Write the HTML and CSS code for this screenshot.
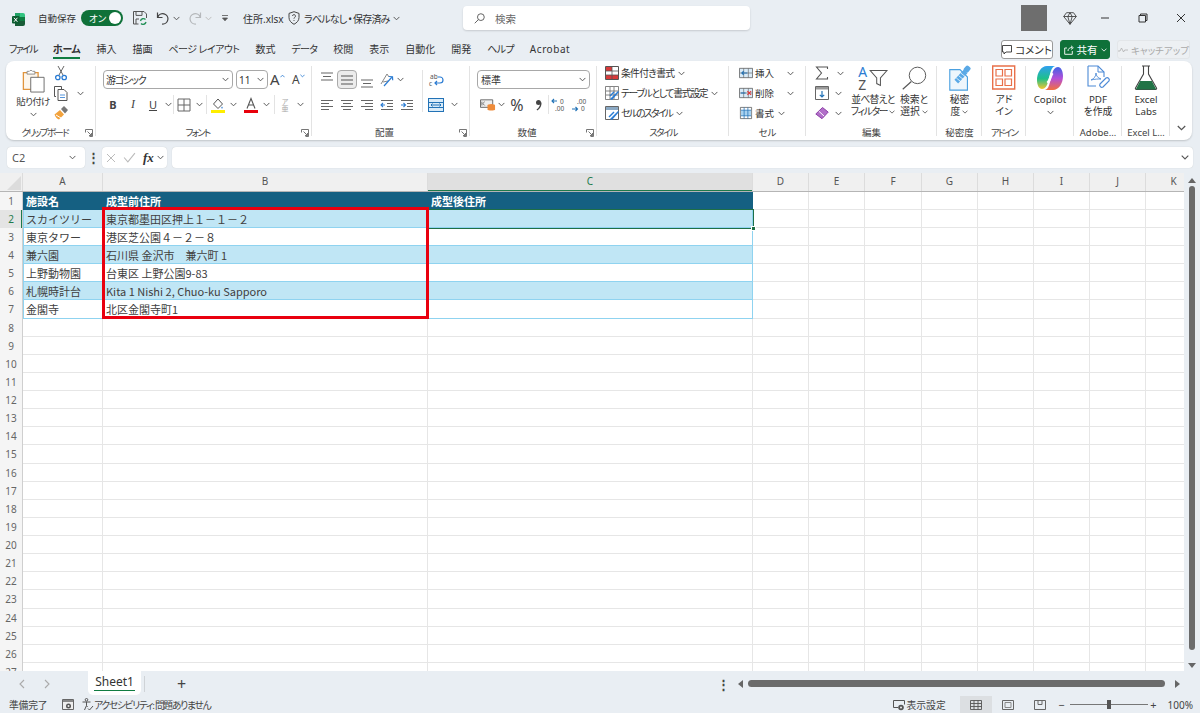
FILE: index.html
```html
<!DOCTYPE html>
<html lang="ja">
<head>
<meta charset="utf-8">
<title>住所.xlsx - Excel</title>
<link rel="stylesheet" href="styles.css">
</head>
<body>
<svg class="defs" aria-hidden="true">
  <symbol id="c" viewBox="0 0 8 5"><path d="M.7.7 4 4 7.3.7" fill="none" stroke="currentColor" stroke-width="1.1"/></symbol>
  <symbol id="launch" viewBox="0 0 8 8"><path d="M.5 3.5v-3h7v7h-3M2.5 2.5l4 4M6.5 4v2.500H4" fill="none" stroke="#666" stroke-width=".9"/></symbol>
  <symbol id="lines-c" viewBox="0 0 14 12"><path d="M1 1.500h12M3 4.500h8M1 7.500h12M3 10.500h8" stroke="#666" stroke-width="1.100"/></symbol>
  <symbol id="lines-l" viewBox="0 0 14 12"><path d="M1 1.500h12M1 4.500h8M1 7.500h12M1 10.500h8" stroke="#666" stroke-width="1.100"/></symbol>
  <symbol id="lines-r" viewBox="0 0 14 12"><path d="M1 1.500h12M5 4.500h8M1 7.500h12M5 10.500h8" stroke="#666" stroke-width="1.100"/></symbol>
</svg>

<header class="titlebar">
  <svg class="xl-logo" viewBox="0 0 14 13"><path d="M3 0h5v4H3z" fill="#21a366"/><path d="M8 0h3a2 2 0 0 1 2 2v2H8z" fill="#33c481"/><path d="M3 4h10v4H3z" fill="#107c41"/><path d="M3 8h10v3a2 2 0 0 1-2 2H3z" fill="#185c37"/><rect x="0" y="3" width="7.500" height="7.500" rx="1" fill="#0c5c30"/><path d="M2 4.800l3.400 4M5.400 4.800l-3.400 4" stroke="#fff" stroke-width="1"/></svg>
  <span class="autosave">自動保存</span>
  <span class="toggle"><span class="toggle-text">オン</span><span class="knob"></span></span>
  <svg class="qat save" viewBox="0 0 14 14"><path d="M.5.500h10.500l2.500 2.500v4M.5.500v12.500h5M3 .8v3.600h6V.8M3 13V8h3" fill="none" stroke="#555" stroke-width="1"/><path d="M7.500 10a3 3 0 0 1 5-1.500M13 11a3 3 0 0 1-5 1.500" fill="none" stroke="#27925a" stroke-width="1.400"/></svg>
  <svg class="qat undo" viewBox="0 0 14 14"><path d="M1.500 1.500v5h5M1.800 6.200A5.200 5.200 0 1 1 6 13" fill="none" stroke="#444" stroke-width="1.200"/></svg>
  <svg class="chev undo-c"><use href="#c"/></svg>
  <svg class="qat redo" viewBox="0 0 14 14"><path d="M12.500 1.500v5h-5M12.200 6.200A5.200 5.200 0 1 0 8 13" fill="none" stroke="#b5b8bb" stroke-width="1.200"/></svg>
  <svg class="chev redo-c dim"><use href="#c"/></svg>
  <svg class="qat-more" viewBox="0 0 8 8"><path d="M1 1.500h6M1.500 4 4 6.800 6.500 4z" fill="#555" stroke="#555" stroke-width=".8"/></svg>
  <span class="filename">住所.xlsx</span>
  <svg class="shield" viewBox="0 0 12 14"><path d="M6 .7 11 2.400v4.200c0 3-2.200 5.200-5 6.700C3.200 11.800 1 9.600 1 6.600V2.400z" fill="none" stroke="#444" stroke-width="1"/><path d="M4.500 5a1.500 1.500 0 1 1 2 1.500c-.5.2-.5.6-.5 1.200M6 9v1" fill="none" stroke="#444" stroke-width=".9"/></svg>
  <span class="label-state">ラベルなし • 保存済み</span>
  <svg class="chev state-c"><use href="#c"/></svg>
  <div class="search">
    <svg class="search-i" viewBox="0 0 12 12"><circle cx="7.500" cy="4.500" r="3.700" fill="none" stroke="#555"/><path d="M4.800 7.200.8 11.200" stroke="#555"/></svg>
    <span>検索</span>
  </div>
  <div class="avatar"></div>
  <svg class="gem" viewBox="0 0 14 13"><path d="M3.500.7h7L13.300 4.500 7 12.300.7 4.500zM.7 4.500h12.600M4.800 4.500 7 12.300l2.200-7.800L7 .7 4.800 4.500" fill="none" stroke="#444" stroke-width=".9"/></svg>
  <div class="winbtns">
    <svg viewBox="0 0 10 10"><path d="M1 5h8" stroke="#333"/></svg>
    <svg viewBox="0 0 10 10"><path d="M2.500 2.500V1h6.500v6.500H7.500M1 2.500h6.500V9H1z" fill="none" stroke="#333"/></svg>
    <svg viewBox="0 0 10 10"><path d="M1 1l8 8M9 1 1 9" stroke="#333"/></svg>
  </div>
</header>

<nav class="tabs">
  <span class="k2">ファイル</span><span class="active">ホーム</span><span>挿入</span><span>描画</span><span class="k1">ページ レイアウト</span><span>数式</span><span class="k3">データ</span><span>校閲</span><span>表示</span><span>自動化</span><span>開発</span><span class="k3">ヘルプ</span><span class="latin">Acrobat</span>
  <div class="tab-actions">
    <button class="btn-comment"><svg viewBox="0 0 10 10"><path d="M.5.500h9v6.500H4L2 9V7H.5z" fill="none" stroke="#333" stroke-width=".9"/></svg>コメント</button>
    <button class="btn-share"><svg viewBox="0 0 10 10"><path d="M3 3H.7v6.300h7.600V6M4 6c0-2.500 2-3.500 4-3.500M7 .8 9.300 2.700 7 4.500" fill="none" stroke="#fff" stroke-width=".9"/></svg>共有<svg class="chev"><use href="#c"/></svg></button>
    <button class="btn-catch"><svg viewBox="0 0 10 6"><path d="M0 4h2l1.500-3 2 4 1.200-2H10" fill="none" stroke="#b0b0b0" stroke-width=".8"/></svg>キャッチアップ</button>
  </div>
</nav>

<section class="ribbon">
  <div class="grp g-clip">
    <div class="body">
      <div class="paste">
        <svg class="paste-i" viewBox="0 0 25 26"><path d="M1.500 4h16v18h-16z" fill="#fdf6ec" stroke="#e0943c" stroke-width="1.400"/><path d="M5.500 5.500V2.500h2.500a2 2 0 0 1 3.500 0h2.500v3z" fill="#fff" stroke="#888"/><path d="M9.500 9h14.500v16H9.500z" fill="#fff" stroke="#666"/></svg>
        <span>貼り付け</span>
        <svg class="chev"><use href="#c"/></svg>
      </div>
      <div class="clip-tools">
        <div class="clip-row"><svg class="i16" viewBox="0 0 16 16"><path d="M5 1l5 9M11 1 6 10" stroke="#666" fill="none"/><circle cx="4.800" cy="12.500" r="2.200" fill="none" stroke="#2b7cd3" stroke-width="1.300"/><circle cx="11.200" cy="12.500" r="2.200" fill="none" stroke="#2b7cd3" stroke-width="1.300"/></svg></div>
        <div class="clip-row"><svg class="i16" viewBox="0 0 16 16"><path d="M3 11.500H1.500V1.500h7V4" fill="none" stroke="#555"/><path d="M5 4.500h6l3 3v8H5z" fill="#fff" stroke="#555"/><path d="M7 10h5M7 12.500h5" stroke="#2b7cd3" stroke-width=".8"/></svg><svg class="chev copy-c"><use href="#c"/></svg></div>
        <div class="clip-row"><svg class="i16" viewBox="0 0 16 16"><path d="M1.500 9.500 7 5l4 4.500-5 5c-1.500-.5-3.500-2-4.500-5z" fill="#f2a23c"/><path d="M8 4l3-3 4 4-3 3.500z" fill="#777"/><path d="M3 10l5 3" stroke="#fff" stroke-width="1"/></svg></div>
      </div>
    </div>
    <div class="glabel launch-gap tight3">クリップボード<svg class="launcher"><use href="#launch"/></svg></div>
  </div>

  <div class="grp g-font">
    <div class="body stack">
      <div class="rw">
        <div class="combo font-name"><span class="tight4">游ゴシック</span><svg class="chev"><use href="#c"/></svg></div>
        <div class="combo font-size"><span>11</span><svg class="chev"><use href="#c"/></svg></div>
        <span class="grow-a">A<svg viewBox="0 0 6 4"><path d="M.5 3.500 3 1l2.500 2.500" fill="none" stroke="#2b7cd3"/></svg></span>
        <span class="shrink-a">A<svg viewBox="0 0 6 4"><path d="M.5.500 3 3 5.500.500" fill="none" stroke="#2b7cd3"/></svg></span>
      </div>
      <div class="rw">
        <span class="sl b">B</span><span class="sl i">I</span><span class="sl u">U</span><span class="ch"><svg class="chev"><use href="#c"/></svg></span>
        <span class="vs"></span>
        <span class="sl"><svg class="i14" viewBox="0 0 14 14"><path d="M1 1h12v12H1zM7 1v12M1 7h12" fill="none" stroke="#666"/></svg></span><span class="ch"><svg class="chev"><use href="#c"/></svg></span>
        <span class="vs ml2"></span>
        <span class="sl ml1"><svg class="i14 tall" viewBox="0 0 14 16"><path d="M2.500 7 7 2l4.500 5L7 11.500z" fill="none" stroke="#555"/><path d="M11 9.500c1 1 1 2 0 2s-1-1 0-2z" fill="#2b7cd3"/><path d="M0 13h14v3H0z" fill="#ffee00"/></svg></span><span class="ch"><svg class="chev"><use href="#c"/></svg></span>
        <span class="sl ml3"><svg class="i14 tall" viewBox="0 0 14 16"><path d="M3 11.500 7 1.500l4 10M4.500 8h5" fill="none" stroke="#555" stroke-width="1.100"/><path d="M0 13h14v3H0z" fill="#e8000b"/></svg></span><span class="ch"><svg class="chev"><use href="#c"/></svg></span>
        <span class="vs ml3"></span>
        <span class="sl ruby"><small>ア</small><small>亜</small></span><span class="ch"><svg class="chev"><use href="#c"/></svg></span>
      </div>
    </div>
    <div class="glabel launch-gap tight3">フォント<svg class="launcher"><use href="#launch"/></svg></div>
  </div>

  <div class="grp g-align">
    <div class="body split">
      <div class="stack">
        <div class="rw">
          <span class="sl"><svg class="i14 top" viewBox="0 0 14 9"><path d="M1 1h12M3 4.500h8M1 8h12" stroke="#666" stroke-width="1.100"/></svg></span>
          <span class="sl on"><svg class="i14" viewBox="0 0 14 10"><path d="M1 1h12M1 5h12M1 9h12" stroke="#555" stroke-width="1.200"/></svg></span>
          <span class="sl"><svg class="i14 bot" viewBox="0 0 14 9"><path d="M1 1h12M3 4.500h8M1 8h12" stroke="#666" stroke-width="1.100"/></svg></span>
          <span class="sl"><svg class="i14" viewBox="0 0 14 14"><path d="M1 11 7 1l2 3M3 9l5-1" fill="none" stroke="#888"/><path d="M4 13 12 4M9 3.500l3.500.2.200 3.500" fill="none" stroke="#2b7cd3" stroke-width="1.200"/></svg></span>
          <span class="ch tight"><svg class="chev"><use href="#c"/></svg></span>
        </div>
        <div class="rw">
          <span class="sl"><svg class="i14"><use href="#lines-l"/></svg></span>
          <span class="sl"><svg class="i14"><use href="#lines-c"/></svg></span>
          <span class="sl"><svg class="i14"><use href="#lines-r"/></svg></span>
          <span class="sl"><svg class="i14" viewBox="0 0 14 12"><path d="M1 1.500h12M7 4.500h6M7 7.500h6M1 10.500h12" stroke="#666"/><path d="M5 6H.8M3 4 1 6l2 2" fill="none" stroke="#2b7cd3" stroke-width="1.100"/></svg></span>
          <span class="sl"><svg class="i14" viewBox="0 0 14 12"><path d="M1 1.500h12M7 4.500h6M7 7.500h6M1 10.500h12" stroke="#666"/><path d="M1 6h4.200M3.500 4l2 2-2 2" fill="none" stroke="#2b7cd3" stroke-width="1.100"/></svg></span>
        </div>
      </div>
      <span class="vs align-sep"></span>
      <div class="stack wrap-col">
        <div class="rw"><span class="sl"><svg class="i16 wrap" viewBox="0 0 16 18"><text x="2" y="8" class="svg-t">ab</text><text x="1" y="15" class="svg-t">c</text><path d="M7 12h5a3 3 0 0 0 0-6H10M9 10l-2 2 2 2" fill="none" stroke="#2b7cd3" stroke-width="1.200"/></svg></span></div>
        <div class="rw"><span class="sl"><svg class="i16" viewBox="0 0 16 14"><rect x=".5" y=".5" width="15" height="13" fill="#d9ebf8" stroke="#2272b6"/><path d="M.5 4.500h15M.5 9.500h15" stroke="#2272b6"/><path d="M3 7h10M4.500 5.500 3 7l1.500 1.500M11.500 5.500 13 7l-1.500 1.500" fill="none" stroke="#2272b6"/></svg></span><span class="ch merge-c"><svg class="chev"><use href="#c"/></svg></span></div>
      </div>
    </div>
    <div class="glabel launch-gap">配置<svg class="launcher"><use href="#launch"/></svg></div>
  </div>

  <div class="grp g-num">
    <div class="body stack">
      <div class="rw"><div class="combo num-fmt"><span>標準</span><svg class="chev"><use href="#c"/></svg></div></div>
      <div class="rw">
        <span class="sl"><svg class="i16" viewBox="0 0 17 13"><path d="M.5 1h13v8H.5z" fill="#eee" stroke="#666"/><ellipse cx="12" cy="7" rx="4" ry="1.600" fill="#ee8b3a"/><path d="M8 7v4.500c0 1 8 1 8 0V7" fill="#ee8b3a"/><path d="M2 3v4M3 5l2-2M3 5l2 2" stroke="#555" fill="none" stroke-width=".8"/></svg></span><span class="ch tight"><svg class="chev"><use href="#c"/></svg></span>
        <span class="sl pct">%</span>
        <span class="sl comma"><svg viewBox="0 0 7 12"><circle cx="3.500" cy="3.500" r="2.500" fill="#444"/><path d="M5.900 3.500c0 3.500-1.500 6-4 7.500" fill="none" stroke="#444" stroke-width="1.400"/></svg></span>
        <span class="vs"></span>
        <span class="sl"><svg class="i16" viewBox="0 0 16 14"><path d="M6 3H1M3 1 1 3l2 2" fill="none" stroke="#2272b6" stroke-width="1.100"/><text x="9" y="6" class="svg-t">0</text><text x="4" y="13" class="svg-t">.00</text></svg></span>
        <span class="sl"><svg class="i16" viewBox="0 0 16 14"><text x="6" y="6" class="svg-t">.00</text><path d="M1 11h5M4.500 9l2 2-2 2" fill="none" stroke="#2272b6" stroke-width="1.100"/><text x="10" y="13" class="svg-t">0</text></svg></span>
      </div>
    </div>
    <div class="glabel launch-gap">数値<svg class="launcher"><use href="#launch"/></svg></div>
  </div>

  <div class="grp g-style">
    <div class="body list">
      <div class="li"><svg class="i14" viewBox="0 0 14 14"><path d="M.5.500h13v13H.5z" fill="#fff" stroke="#555"/><path d="M1 1h6v4H1zM7 9h6v4H7z" fill="#d83b3b"/><path d="M1 9h6v4H1z" fill="#d83b3b"/><path d="M7 1v12M1 5h12M1 9h12" stroke="#555" stroke-width=".8"/></svg><span class="tight1">条件付き書式</span><svg class="chev"><use href="#c"/></svg></div>
      <div class="li"><svg class="i14" viewBox="0 0 14 14"><path d="M.5.500h13v13H.5zM5 1v12M9 1v12M1 5h12M1 9h12" fill="#fff" stroke="#666" stroke-width=".8"/><path d="M5 13 13 5l1 1-7 8z" fill="#2b7cd3"/><path d="M5 10l4-4" stroke="#2b7cd3" stroke-width="1.500"/></svg><span class="tight2">テーブルとして書式設定</span><svg class="chev"><use href="#c"/></svg></div>
      <div class="li"><svg class="i14" viewBox="0 0 14 14"><path d="M.5.500h13v13H.5z" fill="#fff" stroke="#666"/><path d="M1 1h12v3H1z" fill="#8ba9c4"/><path d="M5 13 13 5l1 1-7 8z" fill="#2b7cd3"/><path d="M4 11l5-5" stroke="#2b7cd3" stroke-width="1.500"/></svg><span class="tight3">セルのスタイル</span><svg class="chev"><use href="#c"/></svg></div>
    </div>
    <div class="glabel tight3">スタイル</div>
  </div>

  <div class="grp g-cell">
    <div class="body list">
      <div class="li"><svg class="i14" viewBox="0 0 15 14"><path d="M.5 2h14v10H.5z" fill="#d9ebf8" stroke="#555" stroke-width=".8"/><path d="M5 2v10M10 2v10M1 7h13" stroke="#666" stroke-width=".7"/><path d="M9 7H3M5 5 3 7l2 2" fill="none" stroke="#2272b6" stroke-width="1.200"/></svg><span>挿入</span><svg class="chev far"><use href="#c"/></svg></div>
      <div class="li"><svg class="i14" viewBox="0 0 15 14"><path d="M.5 2h14v10H.5z" fill="#d9ebf8" stroke="#555" stroke-width=".8"/><path d="M5 2v10M10 2v10M1 7h13" stroke="#666" stroke-width=".7"/><path d="M9 5l4 4M13 5 9 9" stroke="#e23b3b" stroke-width="1.300"/><path d="M2 7h5" stroke="#2272b6" stroke-width="1.200"/></svg><span>削除</span><svg class="chev far"><use href="#c"/></svg></div>
      <div class="li"><svg class="i14" viewBox="0 0 15 14"><path d="M1.500 1h12v12h-12z" fill="#fff" stroke="#555" stroke-width=".8"/><path d="M2 4h11v6H2z" fill="#a8d2f0"/><path d="M5.500 1v12M9.500 1v12M2 4h11M2 10h11" stroke="#2272b6" stroke-width=".8"/></svg><span>書式</span><svg class="chev"><use href="#c"/></svg></div>
    </div>
    <div class="glabel">セル</div>
  </div>

  <div class="grp g-edit">
    <div class="body edit">
      <div class="edit-small">
        <div class="es-row"><svg class="i14" viewBox="0 0 14 14"><path d="M12.500 3V1H1.500l5 6-5 6h11v-2" fill="none" stroke="#555" stroke-width="1.100"/></svg><svg class="chev sig-c"><use href="#c"/></svg></div>
        <div class="es-row"><svg class="i14" viewBox="0 0 14 14"><path d="M.5.500h13v13H.5z" fill="#fff" stroke="#666"/><path d="M1 1h12v2.500H1z" fill="#999"/><path d="M7 5v6M4.800 8.800 7 11l2.200-2.200" fill="none" stroke="#2272b6" stroke-width="1.200"/></svg><svg class="chev"><use href="#c"/></svg></div>
        <div class="es-row"><svg class="i14" viewBox="0 0 14 14"><path d="M.8 8 7.500 1.500l5.700 4.600L7 12.700z" fill="#b16fc8" stroke="#8d3fa8"/><path d="M3.800 5.200 9 10" stroke="#fff"/></svg><svg class="chev"><use href="#c"/></svg></div>
      </div>
      <div class="big sort">
        <svg class="big-i sort-i" viewBox="0 0 34 28"><text x="1" y="13" class="svg-az blue">A</text><text x="1" y="27" class="svg-az">Z</text><path d="M14 6h18l-7 8v8l-4-2v-6z" fill="none" stroke="#555" stroke-width="1.100"/></svg>
        <span class="tight1">並べ替えと</span><span class="tight2">フィルター <svg class="chev inl"><use href="#c"/></svg></span>
      </div>
      <div class="big find">
        <svg class="big-i" viewBox="0 0 30 28"><circle cx="19" cy="11" r="9.500" fill="none" stroke="#555" stroke-width="1.100"/><path d="M12 18 2 27" stroke="#555" stroke-width="1.300"/></svg>
        <span>検索と</span><span>選択 <svg class="chev inl"><use href="#c"/></svg></span>
      </div>
    </div>
    <div class="glabel">編集</div>
  </div>

  <div class="grp g-sens">
    <div class="body"><div class="big">
      <svg class="big-i" viewBox="0 0 26 28"><path d="M2 5h11l8 8v14H2z" fill="#eef6fc" stroke="#4aa0e0" stroke-width="1.200"/><path d="M7 16 17 5l4 4L11 20z" fill="#5aa9e6"/><path d="M9 14l5 4M11.500 11.500l5 4M14 8.800l5 4" stroke="#fff" stroke-width=".8"/><rect x="18" y="1" width="6" height="7" rx="2" transform="rotate(40 21 4)" fill="#5aa9e6"/></svg>
      <span>秘密</span><span>度 <svg class="chev inl"><use href="#c"/></svg></span>
    </div></div>
    <div class="glabel">秘密度</div>
  </div>

  <div class="grp g-addin">
    <div class="body"><div class="big">
      <svg class="big-i" viewBox="0 0 24 26"><path d="M.7 1h22v23H.7z" fill="#fff" stroke="#e8704a" stroke-width="1.400"/><path d="M4 4.500h6.500V11H4zM13 4.500h6.500V11H13zM4 14h6.500v6.500H4zM13 14h6.500v6.500H13z" fill="#fff" stroke="#e8704a" stroke-width="1.200"/></svg>
      <span>アド</span><span>イン</span>
    </div></div>
    <div class="glabel tight3">アドイン</div>
  </div>

  <div class="grp g-copilot">
    <div class="body"><div class="big">
      <svg class="big-i copilot-i" viewBox="0 0 26 26">
        <defs>
          <linearGradient id="cpA" x1="0" y1="0" x2="0" y2="1"><stop offset="0" stop-color="#2f9ff0"/><stop offset=".55" stop-color="#1fc08a"/><stop offset="1" stop-color="#f5c52e"/></linearGradient>
          <linearGradient id="cpB" x1="0" y1="0" x2="0" y2="1"><stop offset="0" stop-color="#3f63e6"/><stop offset=".5" stop-color="#b44fd8"/><stop offset="1" stop-color="#f2703f"/></linearGradient>
        </defs>
        <path d="M10 1h8c-3 1-4 4-5 8l-2 8c-1 4-3 7-6 7-3 0-5-4-5-9C0 8 4 1 10 1z" fill="url(#cpA)"/>
        <path d="M16 25H8c3-1 4-4 5-8l2-8c1-4 3-7 6-7 3 0 5 4 5 9 0 7-4 14-10 14z" fill="url(#cpB)"/>
        <path d="M15.500 8C13.500 10 13.500 15 10.500 18" fill="none" stroke="#fff" stroke-width="2.600"/>
      </svg>
      <span>Copilot</span><svg class="chev line-c"><use href="#c"/></svg>
    </div></div>
    <div class="glabel"></div>
  </div>

  <div class="grp g-pdf">
    <div class="body"><div class="big">
      <svg class="big-i" viewBox="0 0 24 26"><path d="M2 1h10l6 6v5M2 1v20h8" fill="none" stroke="#4d8ad6" stroke-width="1.100"/><path d="M12 1v6h6" fill="none" stroke="#4d8ad6"/><path d="M5 15c3-1 5-4 5-7 0 3 2 5 5 6-3 0-6 0-10 1z" fill="none" stroke="#4d8ad6" stroke-width=".9"/><path d="M14 19l6-6a2.200 2.200 0 0 1 3 3l-6 6a2.200 2.200 0 0 1-3-3z" fill="none" stroke="#4d8ad6" stroke-width="1.200"/></svg>
      <span>PDF</span><span>を作成</span>
    </div></div>
    <div class="glabel">Adobe…</div>
  </div>

  <div class="grp g-labs">
    <div class="body"><div class="big">
      <svg class="big-i" viewBox="0 0 24 26"><path d="M8 1h8M9.500 1v8L1.500 23a1 1 0 0 0 1 1.500h19a1 1 0 0 0 1-1.500l-8-14V1" fill="#fff" stroke="#444" stroke-width="1.100"/><path d="M6.200 16h11.600l4 7.500a.7.700 0 0 1-.6 1H2.800a.7.700 0 0 1-.6-1z" fill="#217346"/></svg>
      <span>Excel</span><span>Labs</span>
    </div></div>
    <div class="glabel">Excel L…</div>
  </div>

  <div class="collapse"><svg class="chev"><use href="#c"/></svg></div>
</section>

<section class="formula">
  <div class="namebox"><span>C2</span><svg class="chev"><use href="#c"/></svg></div>
  <span class="kebab">⋮</span>
  <div class="fx-box">
    <svg viewBox="0 0 10 10"><path d="M1 1l8 8M9 1 1 9" stroke="#bbb"/></svg>
    <svg class="fx-check" viewBox="0 0 12 10"><path d="M1 5l3.500 4L11 1" fill="none" stroke="#bbb"/></svg>
    <i>fx</i>
    <svg class="chev"><use href="#c"/></svg>
  </div>
  <div class="fx-input"><svg class="chev"><use href="#c"/></svg></div>
</section>

<section class="sheet-wrap">
  <div class="sheet">
    <div class="colhead">
      <div class="corner"><svg viewBox="0 0 14 14"><path d="M14 0v14H0z" fill="#dcdcdc"/></svg></div>
      <div>A</div><div>B</div><div class="sel">C</div><div>D</div><div>E</div><div>F</div><div>G</div><div>H</div><div>I</div><div>J</div><div>K</div>
    </div>
    <div class="rows">
      <div class="row"><div class="rh">1</div><div class="cell th">施設名</div><div class="cell th">成型前住所</div><div class="cell th">成型後住所</div></div>
      <div class="row"><div class="rh sel">2</div><div class="cell band">スカイツリー</div><div class="cell band">東京都墨田区押上１－１－２</div><div class="cell band"></div></div>
      <div class="row"><div class="rh">3</div><div class="cell pl">東京タワー</div><div class="cell pl">港区芝公園４－２－８</div><div class="cell pl"></div></div>
      <div class="row"><div class="rh">4</div><div class="cell band">兼六園</div><div class="cell band">石川県 金沢市　兼六町 1</div><div class="cell band"></div></div>
      <div class="row"><div class="rh">5</div><div class="cell pl">上野動物園</div><div class="cell pl">台東区 上野公園9-83</div><div class="cell pl"></div></div>
      <div class="row"><div class="rh">6</div><div class="cell band">札幌時計台</div><div class="cell band">Kita 1 Nishi 2, Chuo-ku Sapporo</div><div class="cell band"></div></div>
      <div class="row"><div class="rh">7</div><div class="cell pl">金閣寺</div><div class="cell pl">北区金閣寺町1</div><div class="cell pl"></div></div>
      <div class="row"><div class="rh">8</div></div>
      <div class="row"><div class="rh">9</div></div>
      <div class="row"><div class="rh">10</div></div>
      <div class="row"><div class="rh">11</div></div>
      <div class="row"><div class="rh">12</div></div>
      <div class="row"><div class="rh">13</div></div>
      <div class="row"><div class="rh">14</div></div>
      <div class="row"><div class="rh">15</div></div>
      <div class="row"><div class="rh">16</div></div>
      <div class="row"><div class="rh">17</div></div>
      <div class="row"><div class="rh">18</div></div>
      <div class="row"><div class="rh">19</div></div>
      <div class="row"><div class="rh">20</div></div>
      <div class="row"><div class="rh">21</div></div>
      <div class="row"><div class="rh">22</div></div>
      <div class="row"><div class="rh">23</div></div>
      <div class="row"><div class="rh">24</div></div>
      <div class="row"><div class="rh">25</div></div>
      <div class="row"><div class="rh">26</div></div>
      <div class="row"><div class="rh">27</div></div>
    </div>
    <div class="selection"><span class="handle"></span></div>
    <div class="redbox"></div>
  </div>
  <div class="vscroll">
    <span class="tri up"></span>
    <span class="vthumb"></span>
    <span class="tri down"></span>
  </div>
</section>

<section class="sheetbar">
  <svg class="nav first" viewBox="0 0 6 10"><path d="M5 1 1 5l4 4" fill="none" stroke="#aaa" stroke-width="1.100"/></svg>
  <svg class="nav second" viewBox="0 0 6 10"><path d="M1 1l4 4-4 4" fill="none" stroke="#aaa" stroke-width="1.100"/></svg>
  <div class="sheet-tab">Sheet1</div>
  <span class="tab-sep"></span>
  <span class="plus">+</span>
  <span class="dots">⋮</span>
  <span class="tri left"></span>
  <span class="hthumb"></span>
  <span class="tri right"></span>
</section>

<footer class="status">
  <span class="ready">準備完了</span>
  <svg class="macro" viewBox="0 0 12 11"><path d="M.5.500h11v10H.5z" fill="#eee" stroke="#666"/><path d="M1 1h10v2H1z" fill="#888"/><circle cx="6.500" cy="7" r="2.500" fill="#555"/><circle cx="6.500" cy="7" r="1" fill="#eee"/></svg>
  <svg class="a11y" viewBox="0 0 12 13"><circle cx="5" cy="1.800" r="1.300" fill="none" stroke="#555"/><path d="M1 4h8M5 4v3.500L3 12M5 7.500 6 9M6.500 10.500 8 12l3.500-4" fill="none" stroke="#555"/></svg>
  <span class="a11y-t">アクセシビリティ: 問題ありません</span>
  <div class="status-right">
    <svg class="disp" viewBox="0 0 12 12"><path d="M5 8.500H.5v-7h11v4" fill="none" stroke="#555"/><circle cx="8" cy="8.500" r="2.800" fill="#555"/><circle cx="8" cy="8.500" r="1" fill="#eee"/></svg>
    <span class="disp-t">表示設定</span>
    <span class="view on"><svg viewBox="0 0 12 10"><path d="M.5.500h11v9H.5zM.5 3.500h11M.5 6.500h11M4 .5v9M8 .5v9" fill="none" stroke="#555" stroke-width=".9"/></svg></span>
    <span class="view"><svg viewBox="0 0 12 10"><path d="M.5.500h11v9H.5z" fill="none" stroke="#666"/><path d="M3 2.500h6v5H3z" fill="none" stroke="#888"/></svg></span>
    <span class="view"><svg viewBox="0 0 12 10"><path d="M.5.500v9h11v-9M4 .5v4h4v-4M.5.500h11" fill="none" stroke="#666"/></svg></span>
    <span class="zm">−</span>
    <span class="slider"><span class="sthumb"></span></span>
    <span class="zm">+</span>
    <span class="pct100">100%</span>
  </div>
</footer>
</body>
</html>
```
FILE: styles.css
```css
* { box-sizing: border-box; }
html, body { margin: 0; height: 100%; }
body {
  width: 1200px; height: 713px; overflow: hidden;
  display: flex; flex-direction: column;
  background: #e9eef3; color: #3a3a3a;
  font-family: "Noto Sans", "Noto Sans CJK JP", sans-serif;
  font-size: 10px;
  font-feature-settings: "palt";
}
.defs { display: none; }
svg { display: block; flex: none; }
.chev { width: 7px; height: 5px; color: #555; }
.chev.dim { color: #bbb; }
button { font: inherit; padding: 0; }
.tight1 { letter-spacing: -.7px; }
.tight2 { letter-spacing: -1.300px; }
.tight3 { letter-spacing: -1.700px; }
.tight4 { letter-spacing: -1.200px; }

/* title bar */
.titlebar { height: 36px; display: flex; align-items: center; padding-left: 12px; flex: none; }
.xl-logo { width: 14px; height: 13px; margin-top: 2px; }
.autosave { margin-left: 12px; width: 37px; font-size: 9.500px; color: #333; white-space: nowrap; }
.toggle { margin-left: 6px; width: 42px; height: 16px; border-radius: 8px; background: #0f7139; display: flex; align-items: center; justify-content: space-between; padding: 0 2px 0 8px; color: #fff; }
.toggle-text { font-size: 9.500px; }
.knob { width: 12px; height: 12px; border-radius: 50%; background: #fff; }
.qat { width: 14px; height: 14px; }
.save { margin-left: 10px; }
.undo { margin-left: 9px; }
.undo-c { margin-left: 3px; }
.redo { margin-left: 8px; }
.redo-c { margin-left: 3px; }
.qat-more { width: 8px; height: 8px; margin-left: 9px; }
.filename { margin-left: 14px; width: 44px; color: #333; white-space: nowrap; }
.shield { width: 12px; height: 14px; margin-left: 1px; }
.label-state { margin-left: 4px; color: #333; width: 88px; white-space: nowrap; letter-spacing: -.8px; }
.state-c { margin-left: 1px; }
.search { margin-left: 63px; width: 287px; height: 24px; background: #fff; border-radius: 4px; box-shadow: 0 1px 2px rgba(0,0,0,.15); display: flex; align-items: center; padding-left: 11px; color: #666; font-size: 10.500px; }
.search-i { width: 11px; height: 11px; margin-right: 10px; }
.avatar { margin-left: 271px; width: 26px; height: 26px; background: #6e6e6e; }
.gem { width: 14px; height: 13px; margin-left: 16px; }
.winbtns { margin-left: 23px; display: flex; gap: 28px; }
.winbtns svg { width: 10px; height: 10px; }

/* tabs */
.tabs { height: 25px; flex: none; display: flex; align-items: flex-start; padding: 4px 0 0 9px; gap: 16px; font-size: 10px; color: #333; }
.tabs > span { height: 19px; line-height: 18px; white-space: nowrap; }
.tabs > span.active { font-weight: 700; border-bottom: 2px solid #107c41; letter-spacing: -.3px; }
.tabs > .k1 { letter-spacing: -.55px; }
.tabs > .k2 { letter-spacing: -1.700px; }
.tabs > .k3 { letter-spacing: -.7px; }
.tabs > .latin { letter-spacing: .55px; }
.tab-actions { margin-left: auto; display: flex; gap: 7px; margin-right: 10px; }
.tab-actions button { height: 19px; border-radius: 3px; display: flex; align-items: center; justify-content: center; gap: 3px; font-size: 10.500px; border: 1px solid #999; background: #fff; color: #333; }
.tab-actions svg { width: 10px; height: 10px; }
.btn-comment { width: 52px; }
.tab-actions .btn-share { width: 50px; background: #0f7139; border-color: #0f7139; color: #fff; }
.tab-actions .btn-share .chev { width: 6px; height: 4px; color: #fff; }
.tab-actions .btn-catch { width: 73px; background: #edf0f3; border-color: #e3e6e9; color: #aaa; font-size: 9.500px; }

/* ribbon */
.ribbon { flex: none; height: 79px; margin: 0 8px 0 6px; background: #fff; border-radius: 8px; box-shadow: 0 1px 2px rgba(0,0,0,.18); display: flex; }
.grp { display: flex; flex-direction: column; position: relative; flex: none; }
.grp::after { content: ""; position: absolute; right: 0; top: 5px; bottom: 4px; width: 1px; background: #e3e3e3; }
.g-clip { width: 90px; } .g-font { width: 216px; } .g-align { width: 158px; } .g-num { width: 127px; }
.g-style { width: 132px; } .g-cell { width: 77px; } .g-edit { width: 131px; } .g-sens { width: 45px; }
.g-addin { width: 44px; } .g-copilot { width: 48px; } .g-pdf { width: 48px; } .g-labs { width: 48px; }
.body { flex: 1; display: flex; min-height: 0; }
.stack { display: flex; flex-direction: column; gap: 6px; padding-top: 9px; }
.rw { height: 19px; display: flex; align-items: center; }
.glabel { height: 15px; flex: none; text-align: center; font-size: 9.500px; line-height: 15px; color: #444; white-space: nowrap; }
.launch-gap { padding-right: 13px; position: relative; }
.launcher { position: absolute; right: 3px; bottom: 3px; width: 8px; height: 8px; }
.i14 { width: 14px; height: 14px; }
.i14.tall { height: 16px; }
.i14.top { height: 9px; margin-top: -6px; }
.i14.bot { height: 9px; margin-top: 7px; }
.i16 { width: 16px; height: 16px; }
.i16.wrap { height: 18px; }
.sl { width: 20px; height: 19px; display: flex; align-items: center; justify-content: center; flex: none; color: #444; }
.ch { width: 10px; height: 19px; display: flex; align-items: center; justify-content: center; flex: none; }
.ch.tight { margin-left: -2px; }
.vs { width: 1px; height: 19px; background: #e3e3e3; flex: none; }
.ml1 { margin-left: 1px; } .ml2 { margin-left: 2px; } .ml3 { margin-left: 3px; }
.svg-t { font-size: 6.500px; fill: #555; font-family: "Noto Sans", sans-serif; }
.svg-az { font-size: 15px; fill: #555; font-family: "Noto Sans", sans-serif; }
.svg-az.blue { fill: #2b7cd3; }

/* clipboard */
.paste { width: 44px; margin-left: 5px; padding-top: 8px; display: flex; flex-direction: column; align-items: center; }
.paste-i { width: 23px; height: 24px; }
.paste span { margin-top: 2px; line-height: 13px; font-size: 9.500px; white-space: nowrap; letter-spacing: -.7px; }
.paste .chev { margin-top: 4px; }
.clip-tools { display: flex; flex-direction: column; margin-left: -2px; padding-top: 2px; }
.clip-row { height: 20px; display: flex; align-items: center; }
.copy-c { margin-left: 8px; }

/* font */
.g-font .stack { padding-left: 7px; }
.combo { height: 19px; border: 1px solid #a8a8a8; border-radius: 4px; display: flex; align-items: center; justify-content: space-between; padding: 0 3px 0 2px; font-size: 10px; color: #333; background: #fff; }
.font-name { width: 130px; }
.font-size { width: 32px; margin-left: 3px; }
.grow-a { margin-left: 2px; font-size: 15px; width: 16px; display: flex; line-height: 19px; color: #444; }
.shrink-a { margin-left: 6px; font-size: 12px; width: 16px; display: flex; line-height: 19px; color: #444; }
.grow-a svg, .shrink-a svg { width: 5px; height: 4px; margin-top: 4px; }
.b { font-weight: 700; font-size: 11px; }
.i { font-style: italic; font-family: "Liberation Serif", serif; font-size: 12px; }
.u { text-decoration: underline; font-size: 11px; }
.ruby { flex-direction: column; color: #aaa; line-height: 7px; }
.ruby small { font-size: 7px; }

/* align */
.g-align .split { display: flex; padding-left: 5px; }
.sl.on { background: #ececec; border: 1px solid #aaa; border-radius: 4px; }
.align-sep { height: 42px; margin: 9px 0 0 5px; }
.wrap-col { margin-left: 3px; }
.merge-c { margin-left: 3px; }

/* number */
.g-num .stack { padding-left: 7px; }
.num-fmt { width: 113px; padding-left: 3px; }
.g-num .sl:first-child { margin-left: 1px; }
.pct { font-size: 16px; margin-left: 1px; }
.comma { margin-left: 1px; }
.comma svg { width: 7px; height: 12px; }

/* style + cell lists */
.list { display: flex; flex-direction: column; padding: 2px 0 0 8px; }
.li { height: 20px; display: flex; align-items: center; gap: 2px; font-size: 9.800px; color: #333; white-space: nowrap; }
.li .chev { margin-left: 2px; }
.g-cell .list { padding-left: 10px; }
.g-cell .li { font-size: 9.500px; }
.li .far { margin-left: 11px; }

/* editing */
.edit { padding-left: 9px; }
.edit-small { width: 36px; padding-top: 2px; display: flex; flex-direction: column; }
.es-row { height: 20px; display: flex; align-items: center; gap: 6px; }
.sig-c { margin-left: 2px; }
.big { display: flex; flex-direction: column; align-items: center; width: 100%; padding-top: 4px; font-size: 9.800px; line-height: 12px; color: #333; white-space: nowrap; }
.big span { display: flex; align-items: center; gap: 2px; height: 12px; }
.big-i { width: 26px; height: 26px; margin-bottom: 3px; }
.sort { width: 42px; flex: none; margin-left: 1px; }
.find { width: 40px; flex: none; }
.sort-i { width: 34px; }
.chev.inl { width: 6px; height: 4px; }
.chev.line-c { margin-top: 4px; }
.collapse { flex: 1; display: flex; align-items: flex-end; justify-content: center; padding-bottom: 9px; }
.collapse .chev { width: 9px; height: 6px; }

/* formula */
.formula { flex: none; margin: 7px 7px 0 7px; height: 21px; display: flex; align-items: stretch; }
.namebox { width: 78px; background: #fff; border-radius: 4px; display: flex; align-items: center; justify-content: space-between; padding: 0 9px 0 5px; font-size: 11px; color: #555; box-shadow: 0 0 1px rgba(0,0,0,.2); }
.kebab { width: 17px; text-align: center; font-size: 13px; line-height: 21px; font-weight: 700; color: #444; }
.fx-box { width: 65px; background: #fff; border-radius: 4px; display: flex; align-items: center; padding-left: 4px; gap: 7px; box-shadow: 0 0 1px rgba(0,0,0,.2); }
.fx-box svg { width: 10px; height: 10px; }
.fx-box svg.fx-check { width: 13px; height: 11px; }
.fx-box i { font-family: "Liberation Serif", serif; font-weight: 700; font-size: 13px; color: #333; }
.fx-box svg.chev { width: 7px; height: 5px; margin-left: -4px; }
.fx-input { margin-left: 5px; flex: 1; background: #fff; border-radius: 4px; display: flex; align-items: center; justify-content: flex-end; padding-right: 4px; box-shadow: 0 0 1px rgba(0,0,0,.2); }
.fx-input .chev { width: 8px; height: 5px; }

/* sheet */
.sheet-wrap { flex: none; margin-top: 5px; height: 498px; display: flex; }
.sheet { width: 1184px; height: 498px; overflow: hidden; position: relative; background: #fff; }
.colhead { display: grid; grid-template-columns: 23px 80px 325px 325px 56px 56px 57px 56px 56px 56px 56px 56px; height: 18.700px; background: #f0f0f0; border-bottom: 1px solid #b5b5b5; width: 1202px; }
.colhead > div { text-align: center; font-size: 10px; line-height: 17px; color: #555; border-right: 1px solid #dcdcdc; }
.colhead > .corner { display: flex; justify-content: flex-end; align-items: flex-end; padding: 0 1px 1px 0; }
.corner svg { width: 14px; height: 14px; }
.colhead > .sel { background: #e0e0e0; color: #1e7a4c; box-shadow: inset 0 -1px 0 #1e7a4c; }
.rows {
  background-color: #fff;
  background-image: linear-gradient(#e6e6e6,#e6e6e6), linear-gradient(#e6e6e6,#e6e6e6), linear-gradient(#e6e6e6,#e6e6e6), linear-gradient(#e6e6e6,#e6e6e6), linear-gradient(#e6e6e6,#e6e6e6), linear-gradient(#e6e6e6,#e6e6e6), linear-gradient(#e6e6e6,#e6e6e6), linear-gradient(#e6e6e6,#e6e6e6), linear-gradient(#e6e6e6,#e6e6e6), linear-gradient(#e6e6e6,#e6e6e6);
  background-size: 1px 100%;
  background-repeat: no-repeat;
  background-position: 102px 0, 427px 0, 752px 0, 808px 0, 864px 0, 921px 0, 977px 0, 1033px 0, 1089px 0, 1145px 0;
}
.row { display: grid; grid-template-columns: 23px 80px 325px 325px; height: 18.130px; border-bottom: 1px solid #e6e6e6; }
.rh { grid-column: 1; background: #f5f5f5; border-right: 1px solid #cfcfcf; text-align: center; font-size: 10px; line-height: 18px; color: #666; margin-bottom: -1px; }
.rh.sel { background: #e4e4e4; color: #1e7a4c; box-shadow: inset -1px 0 0 #1e7a4c; }
.cell { font-family: "Noto Sans CJK JP", sans-serif; font-feature-settings: normal; font-size: 11px; line-height: 18px; padding-left: 3px; color: #404040; white-space: nowrap; overflow: hidden; margin-bottom: -1px; border-bottom: 1px solid #8fd3f0; }
.cell.th { background: #156082; color: #fff; font-weight: 700; border-bottom-color: #156082; }
.cell.band { background: #c0e6f5; }
.cell.pl { background: #fff; }
.row .cell:nth-child(2) { box-shadow: inset 1px 0 0 #8fd3f0; }
.row .cell:nth-child(4) { box-shadow: inset -1px 0 0 #8fd3f0; }
.row .cell.th { box-shadow: none; }
.selection { position: absolute; left: 428px; top: 36px; width: 326px; height: 20px; border: 1.500px solid #1e6f46; }
.handle { position: absolute; right: -3px; bottom: -3px; width: 5px; height: 5px; background: #1e6f46; border: 1px solid #fff; }
.redbox { position: absolute; left: 102px; top: 34px; width: 327px; height: 112px; border: 3px solid #e9000f; }

.vscroll { flex: 1; display: flex; flex-direction: column; align-items: center; padding-top: 5px; }
.tri { width: 0; height: 0; flex: none; border-style: solid; }
.tri.up { border-width: 0 4px 5px 4px; border-color: transparent transparent #666; }
.tri.down { border-width: 5px 4px 0 4px; border-color: #666 transparent transparent; margin-top: 13px; }
.tri.left { border-width: 4px 5px 4px 0; border-color: transparent #666 transparent transparent; margin-left: 10px; }
.tri.right { border-width: 4px 0 4px 5px; border-color: transparent transparent transparent #666; margin-left: 10px; }
.vthumb { width: 6px; height: 464px; margin-top: 3px; border-radius: 3px; background: #6b6b6b; }

/* sheet bar */
.sheetbar { flex: none; height: 25px; display: flex; align-items: center; padding-left: 19px; }
.nav { width: 6px; height: 10px; }
.nav.second { margin-left: 19px; }
.sheet-tab { margin-left: 38px; width: 53px; height: 24px; margin-top: -1px; background: #fff; border-radius: 0 0 5px 5px; text-align: center; font-size: 12px; line-height: 22px; color: #333; position: relative; }
.sheet-tab::after { content: ""; position: absolute; left: 6px; right: 6px; bottom: 4px; height: 1.500px; background: #107c41; }
.tab-sep { width: 1px; height: 16px; background: #cfd3d7; margin-left: 3px; }
.plus { margin-left: 32px; font-size: 16px; line-height: 20px; color: #444; }
.dots { margin-left: 531px; font-size: 13px; font-weight: 700; color: #444; width: 10px; text-align: center; }
.hthumb { width: 417px; height: 7px; margin-left: 5px; background: #6b6b6b; border-radius: 4px; }
.sheetbar .tri.left { margin-left: 11px; }

/* status */
.status { flex: none; height: 17px; display: flex; align-items: center; padding-left: 9px; font-size: 9.800px; color: #444; white-space: nowrap; }
.ready { width: 53px; letter-spacing: -.2px; }
.macro { width: 12px; height: 11px; }
.a11y { width: 13px; height: 13px; margin-left: 7px; }
.a11y-t { letter-spacing: -1.300px; }
.status .a11y { margin-left: 7px; }
.status-right { margin-left: auto; display: flex; align-items: center; height: 17px; padding-right: 7px; }
.disp { width: 12px; height: 12px; }
.disp-t { margin-left: 2px; width: 53px; }
.view { width: 32px; height: 17px; display: flex; align-items: center; justify-content: center; }
.view.on { background: #dcdfe2; }
.view svg { width: 12px; height: 10px; }
.zm { font-size: 11px; margin-left: 2px; width: 8px; text-align: center; }
.slider { width: 78px; height: 1px; background: #777; margin-left: 4px; position: relative; display: block; }
.sthumb { position: absolute; left: 37px; top: -4px; width: 4px; height: 9px; background: #555; }
.pct100 { margin-left: 10px; font-size: 10px; }
```
